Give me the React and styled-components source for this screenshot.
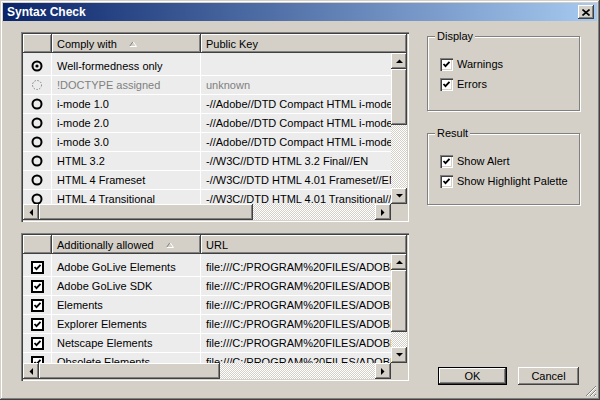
import styled, { createGlobalStyle } from 'styled-components';

const GlobalStyle = createGlobalStyle`
  html, body {
    margin: 0;
    padding: 0;
    background: #d4d0c8;
  }
  body {
    color: #000;
    font-family: "Liberation Sans", Arial, sans-serif;
    font-size: 11px;
  }
  * {
    box-sizing: border-box;
  }
`;

const raised = `
  background: #d4d0c8;
  box-shadow: inset -1px -1px #404040, inset 1px 1px #fff, inset -2px -2px #808080, inset 2px 2px #d4d0c8;
`;

const Window = styled.div`
  ${raised}
  box-shadow: inset -1px -1px #404040, inset 1px 1px #d4d0c8, inset -2px -2px #808080, inset 2px 2px #fff;
  display: flex;
  flex-direction: column;
  height: 400px;
  padding: 3px;
  position: relative;
  width: 600px;
`;

const TitleBar = styled.div`
  align-items: center;
  background: linear-gradient(to right, #0a246a, #a6caf0);
  display: flex;
  height: 18px;
  justify-content: space-between;
  padding: 0 3px 0 4px;
`;

const Title = styled.span`
  color: #fff;
  font-size: 12px;
  font-weight: bold;
`;

const CloseButton = styled.div`
  ${raised}
  align-items: center;
  display: flex;
  height: 14px;
  justify-content: center;
  width: 16px;
`;

const Body = styled.div`
  display: flex;
  flex: 1;
  gap: 18px;
  padding: 11px 0 12px 18px;
`;

const LeftColumn = styled.div`
  display: flex;
  flex-direction: column;
  gap: 11px;
  width: 388px;
`;

const ListFrame = styled.div`
  background: #d4d0c8;
  box-shadow: inset 1px 1px #808080, inset 2px 2px #404040, inset -1px -1px #fff, inset -2px -2px #d4d0c8;
  display: grid;
  grid-template-columns: 1fr 16px;
  grid-template-rows: 19px 1fr 16px;
  height: ${({ $height }) => $height}px;
  padding: 2px;
`;

const Header = styled.div`
  display: grid;
  grid-column: 1 / -1;
  grid-template-columns: 29px 149px 1fr;
`;

const HeaderCell = styled.div`
  ${raised}
  align-items: center;
  display: flex;
  gap: 12px;
  padding-left: 5px;
`;

const RowsViewport = styled.div`
  background: #fff;
  overflow: hidden;
`;

const Row = styled.div`
  display: grid;
  gap: 1px;
  grid-template-columns: 28px 148px 1fr;
  height: 18px;
  margin-bottom: 1px;

  &:first-child {
    height: 22px;
  }
  &:first-child > * {
    padding-top: 4px;
  }
`;

const Cell = styled.div`
  align-items: center;
  background: #ececec;
  color: ${({ $disabled }) => $disabled ? '#808080' : '#000'};
  display: flex;
  justify-content: ${({ $center }) => $center ? 'center' : 'flex-start'};
  padding-left: ${({ $center }) => $center ? '0' : '5px'};
  white-space: nowrap;
`;

const VScroll = styled.div`
  display: flex;
  flex-direction: column;
`;

const HScroll = styled.div`
  display: flex;
`;

const Corner = styled.div`
  background: #d4d0c8;
`;

const ScrollButton = styled.div`
  ${raised}
  align-items: center;
  display: flex;
  flex: none;
  height: 16px;
  justify-content: center;
  width: 16px;
`;

const Thumb = styled.div`
  ${raised}
  flex: none;
  height: ${({ $vertical, $size }) => $vertical ? `${$size}px` : '16px'};
  width: ${({ $vertical, $size }) => $vertical ? '16px' : `${$size}px`};
`;

const Track = styled.div`
  background-image: conic-gradient(#fff 25%, #d4d0c8 0 50%, #fff 0 75%, #d4d0c8 0);
  background-size: 2px 2px;
  flex: 1;
`;

const RightColumn = styled.div`
  display: flex;
  flex-direction: column;
  margin-top: -2px;
  width: 153px;
`;

const Group = styled.fieldset`
  border: 1px solid #808080;
  box-shadow: 1px 1px #fff, inset 1px 1px #fff;
  height: ${({ $height }) => $height}px;
  margin: ${({ $gap }) => $gap}px 0 0;
  min-inline-size: auto;
  padding: 11px 12px 0 12px;
`;

const Legend = styled.legend`
  background: #d4d0c8;
  line-height: 13px;
  margin-left: -5px;
  padding: 0 2px;
`;

const CheckRow = styled.label`
  align-items: center;
  display: flex;
  gap: 4px;
  height: 20px;
  white-space: nowrap;
`;

const Box3D = styled.span`
  background: #fff;
  box-shadow: inset 1px 1px #808080, inset 2px 2px #404040, inset -1px -1px #fff, inset -2px -2px #d4d0c8;
  display: inline-flex;
  flex: none;
  height: 13px;
  width: 13px;
`;

const ButtonRow = styled.div`
  display: flex;
  gap: 11px;
  justify-content: flex-end;
  margin-top: auto;
  padding-right: 1px;
`;

const PushButton = styled.div`
  ${raised}
  align-items: center;
  border: ${({ $default }) => $default ? '1px solid #000' : 'none'};
  display: flex;
  height: 18px;
  justify-content: center;
  width: ${({ $width }) => $width}px;
`;

const Grip = styled.svg`
  bottom: 3px;
  position: absolute;
  right: 3px;
`;

const Arrow = ({ dir }) => {
  const points = {
    up: '0,4 7,4 3.5,0.5',
    down: '0,0 7,0 3.5,3.5',
    left: '4,0 4,7 0.5,3.5',
    right: '0,0 0,7 3.5,3.5',
  }[dir];
  const vertical = dir === 'up' || dir === 'down';
  return (
    <svg width={vertical ? 7 : 4} height={vertical ? 4 : 7}>
      <polygon points={points} fill="#000" />
    </svg>
  );
};

const SortMark = () => (
  <svg width="8" height="6">
    <line x1="0.5" y1="5.5" x2="4" y2="0.5" stroke="#808080" />
    <line x1="4" y1="0.5" x2="7.5" y2="5.5" stroke="#fff" />
    <line x1="0.5" y1="5.5" x2="7.5" y2="5.5" stroke="#fff" />
  </svg>
);

const Radio = ({ state }) => (
  <svg width="12" height="12">
    {state === 'disabled' ? (
      <circle cx="6" cy="6" r="4.5" fill="none" stroke="#808080" strokeDasharray="1.5 1.5" />
    ) : (
      <circle cx="6" cy="6" r="4.5" fill="none" stroke="#000" strokeWidth="2" />
    )}
    {state === 'selected' && <circle cx="6" cy="6" r="1.6" fill="#000" />}
  </svg>
);

const CheckMark = () => (
  <svg width="13" height="13">
    <polyline points="3.5,6 5.5,8.2 9.5,3.8" fill="none" stroke="#000" strokeWidth="1.8" />
  </svg>
);

const ListCheck = () => (
  <svg width="13" height="13">
    <rect x="1" y="1" width="11" height="11" fill="#fff" stroke="#000" strokeWidth="2" />
    <polyline points="3.5,6 5.5,8.2 9.5,3.8" fill="none" stroke="#000" strokeWidth="1.8" />
  </svg>
);

const Check = ({ label }) => (
  <CheckRow>
    <Box3D><CheckMark /></Box3D>
    {label}
  </CheckRow>
);

function ListView({ height, columns, rows, renderMark, vThumb, hThumb }) {
  return (
    <ListFrame $height={height}>
      <Header>
        <HeaderCell />
        <HeaderCell>{columns[0]}<SortMark /></HeaderCell>
        <HeaderCell>{columns[1]}</HeaderCell>
      </Header>
      <RowsViewport>
        {rows.map((row) => (
          <Row key={row.label}>
            <Cell $center>{renderMark(row)}</Cell>
            <Cell $disabled={row.state === 'disabled'}>{row.label}</Cell>
            <Cell $disabled={row.state === 'disabled'}>{row.value}</Cell>
          </Row>
        ))}
      </RowsViewport>
      <VScroll>
        <ScrollButton><Arrow dir="up" /></ScrollButton>
        <Thumb $vertical $size={vThumb} />
        <Track />
        <ScrollButton><Arrow dir="down" /></ScrollButton>
      </VScroll>
      <HScroll>
        <ScrollButton><Arrow dir="left" /></ScrollButton>
        <Thumb $size={hThumb} />
        <Track />
        <ScrollButton><Arrow dir="right" /></ScrollButton>
      </HScroll>
      <Corner />
    </ListFrame>
  );
}

const doctypes = [
  { label: 'Well-formedness only', value: '', state: 'selected' },
  { label: '!DOCTYPE assigned', value: 'unknown', state: 'disabled' },
  { label: 'i-mode 1.0', value: '-//Adobe//DTD Compact HTML i-mode 1.0//EN' },
  { label: 'i-mode 2.0', value: '-//Adobe//DTD Compact HTML i-mode 2.0//EN' },
  { label: 'i-mode 3.0', value: '-//Adobe//DTD Compact HTML i-mode 3.0//EN' },
  { label: 'HTML 3.2', value: '-//W3C//DTD HTML 3.2 Final//EN' },
  { label: 'HTML 4 Frameset', value: '-//W3C//DTD HTML 4.01 Frameset//EN' },
  { label: 'HTML 4 Transitional', value: '-//W3C//DTD HTML 4.01 Transitional//EN' },
  { label: 'HTML 4 Strict', value: '-//W3C//DTD HTML 4.01//EN' },
];

const url = 'file:///C:/PROGRAM%20FILES/ADOBE/GOLIVE/MODULES/';

const extras = [
  'Adobe GoLive Elements',
  'Adobe GoLive SDK',
  'Elements',
  'Explorer Elements',
  'Netscape Elements',
  'Obsolete Elements',
  'WAP Elements',
].map((label) => ({ label, value: url }));

export default function App() {
  return (
    <Window>
      <GlobalStyle />
      <TitleBar>
        <Title>Syntax Check</Title>
        <CloseButton>
          <svg width="8" height="7">
            <path d="M0.5 0.5 L7.5 6.5 M7.5 0.5 L0.5 6.5" stroke="#000" strokeWidth="1.6" />
          </svg>
        </CloseButton>
      </TitleBar>
      <Body>
        <LeftColumn>
          <ListView
            height={190}
            columns={['Comply with', 'Public Key']}
            rows={doctypes}
            renderMark={(row) => <Radio state={row.state} />}
            vThumb={56}
            hThumb={214}
          />
          <ListView
            height={148}
            columns={['Additionally allowed', 'URL']}
            rows={extras}
            renderMark={() => <ListCheck />}
            vThumb={62}
            hThumb={181}
          />
        </LeftColumn>
        <RightColumn>
          <Group $gap={0} $height={81}>
            <Legend>Display</Legend>
            <Check label="Warnings" />
            <Check label="Errors" />
          </Group>
          <Group $gap={16} $height={78}>
            <Legend>Result</Legend>
            <Check label="Show Alert" />
            <Check label="Show Highlight Palette" />
          </Group>
          <ButtonRow>
            <PushButton $default $width={69}>OK</PushButton>
            <PushButton $width={61}>Cancel</PushButton>
          </ButtonRow>
        </RightColumn>
      </Body>
      <Grip width="12" height="12">
        <path d="M11 1 L1 11 M11 5 L5 11 M11 9 L9 11" stroke="#808080" />
        <path d="M11 2 L2 11 M11 6 L6 11 M11 10 L10 11" stroke="#fff" />
      </Grip>
    </Window>
  );
}
